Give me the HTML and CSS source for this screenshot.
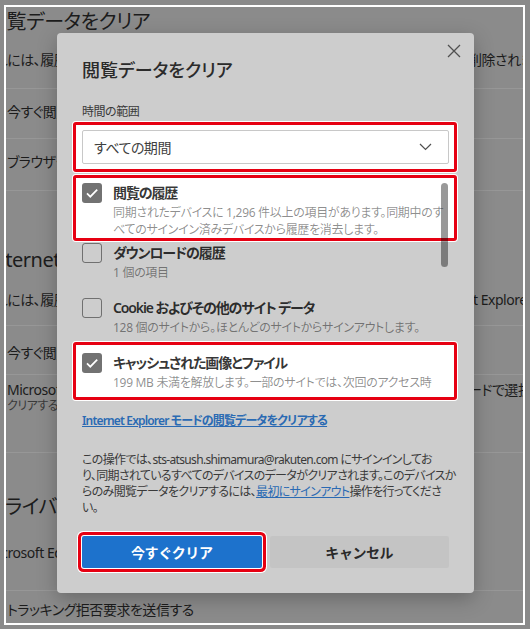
FILE: index.html
```html
<!DOCTYPE html>
<html lang="ja">
<head>
  <meta charset="UTF-8">
  <title>閲覧データをクリア</title>
  <link rel="stylesheet" href="styles.css">
</head>
<body>

  <div class="frame">
    <!-- 背景の設定ページ（暗転） -->
    <div class="page">
      <div class="row row-h1"><span class="out">閲覧データをクリア</span></div>
      <div class="row row-desc sep">
        <span class="out out-desc">これには、履歴、パスワード、Cookie などが含まれます。</span>
        <span class="right">削除されます。データの管理</span>
      </div>
      <div class="row row-item sep"><span class="in">今すぐ閲覧データをクリア</span></div>
      <div class="row row-desc sep"><span class="in">ブラウザーを閉じるたびにクリアするデータを選択する</span></div>
      <div class="row row-h1 row-h1-gap"><span class="out">Internet Explorer の閲覧データをクリア</span></div>
      <div class="row row-desc row-desc-2 sep">
        <span class="out out-desc">これには、履歴、Cookie などが含まれます。</span>
        <span class="right right-t">t Explorer モードのデータ</span>
      </div>
      <div class="row row-item row-item-2 sep"><span class="in">今すぐ閲覧データをクリア</span></div>
      <div class="row row-two sep">
        <div class="in">
          <div class="two-title">Microsoft Edge を閉じるたびに</div>
          <div class="two-sub">クリアする項目を選択してください</div>
        </div>
        <span class="right two-title">ードで選択したデータ</span>
      </div>
      <div class="row row-h1 row-h1-gap2"><span class="out">プライバシー</span></div>
      <div class="row row-desc row-desc-3 sep"><span class="out ms">Microsoft Edge のプライバシー設定を選択します</span></div>
      <div class="row row-last"><span class="in">トラッキング拒否要求を送信する</span></div>
    </div>

    <!-- 閲覧データのクリア ダイアログ -->
    <div class="dialog">
      <button class="close" aria-label="閉じる">
        <svg width="14" height="14" viewBox="0 0 14 14"><path d="M1 1l12 12M13 1L1 13" stroke="#505050" stroke-width="1.3" fill="none"/></svg>
      </button>

      <h2 class="title">閲覧データをクリア</h2>

      <div class="label">時間の範囲</div>
      <div class="hl-box">
        <div class="select">
          <span>すべての期間</span>
          <svg width="13" height="8" viewBox="0 0 13 8"><path d="M1 1l5.5 5.5L12 1" stroke="#505050" stroke-width="1.2" fill="none"/></svg>
        </div>
      </div>

      <div class="list">
        <div class="thumb"></div>

        <div class="item hl">
          <span class="check on"><svg width="20" height="20" viewBox="0 0 20 20"><path d="M5 10.4l3.3 3.3L15.2 6.6" stroke="#fff" stroke-width="1.7" fill="none"/></svg></span>
          <div class="item-text">
            <div class="item-title">閲覧の履歴</div>
            <div class="item-desc">同期されたデバイスに 1,296 件以上の項目があります。同期中のす<br>べてのサインイン済みデバイスから履歴を消去します。</div>
          </div>
        </div>

        <div class="item">
          <span class="check"></span>
          <div class="item-text">
            <div class="item-title">ダウンロードの履歴</div>
            <div class="item-desc">1 個の項目</div>
          </div>
        </div>

        <div class="item">
          <span class="check"></span>
          <div class="item-text">
            <div class="item-title">Cookie およびその他のサイト データ</div>
            <div class="item-desc">128 個のサイトから。ほとんどのサイトからサインアウトします。</div>
          </div>
        </div>

        <div class="item hl hl-cut">
          <span class="check on"><svg width="20" height="20" viewBox="0 0 20 20"><path d="M5 10.4l3.3 3.3L15.2 6.6" stroke="#fff" stroke-width="1.7" fill="none"/></svg></span>
          <div class="item-text">
            <div class="item-title">キャッシュされた画像とファイル</div>
            <div class="item-desc">199 MB 未満を解放します。一部のサイトでは、次回のアクセス時<br>に読み込みが遅くなる可能性があります。</div>
          </div>
        </div>
      </div>

      <a class="link" href="#">Internet Explorer モードの閲覧データをクリアする</a>

      <p class="info">この操作では、sts-atsush.shimamura@rakuten.com にサインインしてお<br>り、同期されているすべてのデバイスのデータがクリアされます。このデバイスか<br>らのみ閲覧データをクリアするには、<a href="#">最初にサインアウト</a>操作を行ってくださ<br>い。</p>

      <div class="buttons">
        <button class="btn primary">今すぐクリア</button>
        <button class="btn">キャンセル</button>
      </div>
    </div>
  </div>

</body>
</html>
```

FILE: styles.css
```css
body {
  margin: 0;
  background: #8a8a8a;
  font-family: "Noto Sans", "Noto Sans CJK JP", sans-serif;
  font-feature-settings: "palt";
}

.frame {
  position: relative;
  box-sizing: border-box;
  width: 521px;
  height: 620px;
  margin: 5px 5px 4px 4px;
  border: 2px solid #fff;
  background: #8b8b8b;
  overflow: hidden;
}

/* 背景ページ */
.page {
  color: #1c1c1c;
  letter-spacing: -0.03em;
}

.row {
  display: grid;
  grid-template-columns: 460px 1fr;
  align-items: start;
  box-sizing: border-box;
  white-space: nowrap;
  font-size: 14px;
  line-height: 20px;
}

.row > * {
  overflow: hidden;
}

.sep {
  border-bottom: 1px solid #979797;
}

.out {
  margin-left: -19px;
}

.out-desc {
  margin-left: -24px;
}

.ms {
  margin-left: -20px;
}

.in {
  padding-left: 1px;
}

.right {
  padding-left: 2px;
}

.right-t {
  padding-left: 7px;
}

.row-h1 {
  height: 30px;
  padding-top: 1px;
  font-size: 20px;
  line-height: 28px;
}

.row-h1-gap {
  height: 83px;
  padding-top: 55px;
}

.row-h1-gap2 {
  height: 77px;
  padding-top: 40px;
}

.row-desc {
  height: 52px;
  padding-top: 13px;
}

.row-desc-2 {
  padding-top: 16px;
}

.row-desc-3 {
  height: 61px;
}

.row-item {
  height: 50px;
  padding-top: 13px;
}

.row-item-2 {
  height: 49px;
  padding-top: 17px;
}

.row-two {
  height: 78px;
  padding-top: 6px;
}

.two-title {
  line-height: 18px;
}

.two-sub {
  font-size: 12px;
  line-height: 14px;
  color: #3a3a3a;
}

.row-last {
  padding-top: 9px;
}

/* ダイアログ */
.dialog {
  position: absolute;
  left: 51px;
  top: 26px;
  z-index: 1;
  box-sizing: border-box;
  width: 417px;
  height: 560px;
  padding: 23px 25px 25px;
  display: flex;
  flex-direction: column;
  background: #cdcdcd;
  border-radius: 4px;
  box-shadow: 0 6px 20px rgba(0, 0, 0, 0.25);
  color: #333;
  letter-spacing: -0.03em;
}

.close {
  position: absolute;
  top: 11px;
  right: 13px;
  padding: 0;
  border: none;
  background: none;
  line-height: 0;
}

.title {
  margin: 0;
  font-size: 18px;
  line-height: 28px;
  font-weight: 500;
  letter-spacing: 0;
  color: #2b2b2b;
}

.label {
  margin-top: 20px;
  font-size: 12px;
  line-height: 16px;
  color: #3a3a3a;
}

.hl-box {
  margin: 2px -8px 0 -9px;
  padding: 5px 5px 5px 6px;
  border: 3px solid #e60012;
  border-radius: 3px;
  background: #fff;
  box-shadow: 0 0 0 1px #fff;
}

.select {
  box-sizing: border-box;
  height: 34px;
  display: flex;
  align-items: center;
  justify-content: space-between;
  padding: 0 16px 0 11px;
  border: 1px solid #c8c8c8;
  border-radius: 2px;
  font-size: 14px;
  color: #404040;
}

.list {
  position: relative;
  margin-top: 11px;
  display: flex;
  flex-direction: column;
  gap: 5px;
}

.thumb {
  position: absolute;
  top: 0;
  right: 1px;
  z-index: 1;
  width: 7px;
  height: 84px;
  border-radius: 4px;
  background: rgba(0, 0, 0, 0.4);
}

.item {
  display: flex;
  gap: 11px;
  min-height: 50px;
}

.hl {
  position: relative;
}

.hl::before {
  content: "";
  position: absolute;
  top: -8px;
  left: -9px;
  right: -8px;
  bottom: -3px;
  z-index: -1;
  border: 3px solid #e60012;
  border-radius: 3px;
  background: #fff;
  box-shadow: 0 0 0 1px #fff;
}

.hl-cut::before {
  top: -11px;
  bottom: 3px;
}

/* スクロール領域で2行目が隠れている */
.hl-cut .item-desc {
  height: 17px;
  overflow: hidden;
}

.check {
  flex: none;
  box-sizing: border-box;
  width: 20px;
  height: 20px;
  border: 1px solid rgba(0, 0, 0, 0.45);
  border-radius: 3px;
  line-height: 0;
}

.check.on {
  border: none;
  background: #727272;
}

.item-text {
  flex: 1;
  padding-right: 2px;
}

.item-title {
  font-size: 14px;
  line-height: 20px;
  font-weight: 600;
  letter-spacing: -0.08em;
  color: rgba(0, 0, 0, 0.8);
}

.item-desc {
  margin-top: 1px;
  font-size: 12px;
  line-height: 17px;
  letter-spacing: -0.025em;
  color: rgba(0, 0, 0, 0.45);
}

.link {
  align-self: flex-start;
  margin-top: 9px;
  font-size: 12px;
  line-height: 18px;
  font-weight: 600;
  letter-spacing: -0.07em;
  color: #2a6ab3;
}

.info {
  margin: 22px 0 0;
  font-size: 12px;
  line-height: 16px;
  letter-spacing: -0.055em;
  white-space: nowrap;
  color: #3a3a3a;
}

.info a {
  color: #2a6ab3;
}

.buttons {
  margin-top: auto;
  display: grid;
  grid-template-columns: 1fr 1fr;
  gap: 8px;
}

.btn {
  height: 32px;
  border: none;
  border-radius: 2px;
  background: #c4c4c4;
  font-family: inherit;
  font-size: 14px;
  font-weight: 600;
  letter-spacing: -0.03em;
  color: #2a2a2a;
}

.btn.primary {
  background: #1d72cc;
  color: #fff;
  box-shadow: 0 0 0 1px #fff, 0 0 0 4px #e60012, 0 0 0 5px #fff;
}
```
